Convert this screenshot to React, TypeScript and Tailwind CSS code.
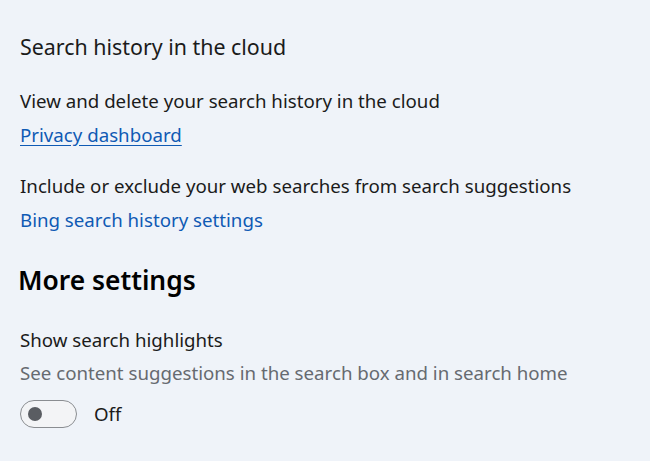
export default function App() {
  return (
    <div
      className="h-[461px] w-[650px] overflow-hidden bg-[#eff3f9] pl-5 text-[#1b1b1b]"
      style={{ fontFamily: '"Noto Sans", "Open Sans", sans-serif' }}
    >
      <div className="pt-[33px] text-[21.4px] leading-[28px]">Search history in the cloud</div>

      <div className="mt-[27px] text-[18.7px] leading-[26px]">View and delete your search history in the cloud</div>
      <a href="#" className="mt-[8px] block w-fit text-[18.7px] leading-[26px] text-[#0f5ab4] underline underline-offset-[3px]">
        Privacy dashboard
      </a>

      <div className="mt-[25px] text-[18.7px] leading-[26px]">Include or exclude your web searches from search suggestions</div>
      <a href="#" className="mt-[8px] block w-fit text-[18.7px] leading-[26px] text-[#0f5ab4]">
        Bing search history settings
      </a>

      <h2 className="-ml-[2px] mt-[29px] text-[26.4px] font-semibold leading-[36px] text-black">More settings</h2>

      <div className="mt-[29px] text-[18.7px] leading-[26px]">Show search highlights</div>
      <div className="mt-[7px] text-[18.7px] leading-[26px] text-[#666a70]">See content suggestions in the search box and in search home</div>

      <div className="mt-[14px] flex items-center gap-[17px]">
        <button className="flex h-[28px] w-[57px] items-center rounded-full border border-[#8a8d91] bg-[#f3f4f6] px-[7px]">
          <span className="h-[14px] w-[14px] rounded-full bg-[#5a5d62]" />
        </button>
        <span className="text-[18.7px] leading-[26px]">Off</span>
      </div>
    </div>
  )
}
